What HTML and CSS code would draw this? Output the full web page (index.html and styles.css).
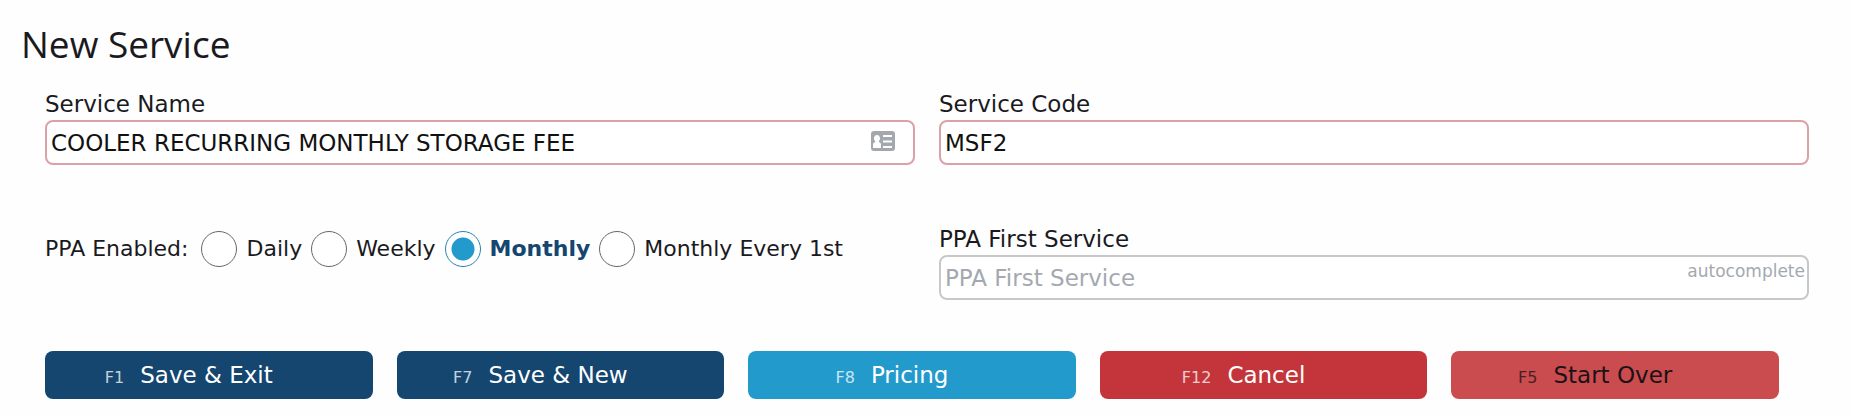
FILE: index.html
```html
<!DOCTYPE html>
<html lang="en">
<head>
    <meta charset="UTF-8">
    <meta name="viewport" content="width=device-width, initial-scale=1.0">
    <title>New Service</title>
    <link rel="stylesheet" href="styles.css">
</head>
<body>
    <h1>New Service</h1>

    <form class="service-form">
        <div class="fields">
            <div class="field">
                <label for="service-name">Service Name</label>
                <div class="input-wrap">
                    <input type="text" id="service-name" class="required" value="COOLER RECURRING MONTHLY STORAGE FEE">
                    <svg class="card-icon" viewBox="0 0 24 20" aria-hidden="true">
                        <rect width="24" height="20" rx="3" fill="#a3a8ae"/>
                        <path fill="#fff" d="M6 4c1.800 0 3 1.300 3 3.200 0 1.300-.5 2.300-1.200 2.900v.9c1.400.4 2.200 1.300 2.200 2.700V17H2v-3.300c0-1.400.8-2.300 2.200-2.700v-.9C3.500 9.500 3 8.500 3 7.200 3 5.300 4.200 4 6 4z"/>
                        <path stroke="#fff" stroke-width="2" d="M12 5h9M12 10.500h9M12 16h9"/>
                    </svg>
                </div>
            </div>

            <div class="field">
                <label for="service-code">Service Code</label>
                <input type="text" id="service-code" class="required" value="MSF2">
            </div>

            <div class="radio-group" role="radiogroup" aria-labelledby="ppa-label">
                <span id="ppa-label" class="group-label">PPA Enabled:</span>
                <input type="radio" name="ppa" id="ppa-daily">
                <label for="ppa-daily">Daily</label>
                <input type="radio" name="ppa" id="ppa-weekly">
                <label for="ppa-weekly">Weekly</label>
                <input type="radio" name="ppa" id="ppa-monthly" checked>
                <label for="ppa-monthly">Monthly</label>
                <input type="radio" name="ppa" id="ppa-first">
                <label for="ppa-first">Monthly Every 1st</label>
            </div>

            <div class="field">
                <label for="first-service">PPA First Service</label>
                <div class="input-wrap">
                    <input type="text" id="first-service" placeholder="PPA First Service">
                    <span class="hint">autocomplete</span>
                </div>
            </div>
        </div>

        <div class="buttons">
            <button type="button" class="save"><small>F1</small>Save &amp; Exit</button>
            <button type="button" class="save"><small>F7</small>Save &amp; New</button>
            <button type="button" class="pricing"><small>F8</small>Pricing</button>
            <button type="button" class="cancel"><small>F12</small>Cancel</button>
            <button type="button" class="start-over"><small>F5</small>Start Over</button>
        </div>
    </form>
</body>
</html>
```

FILE: styles.css
```css
* {
    box-sizing: border-box;
}
body {
    margin: 0;
    padding: 16px 42px 16px 21px;
    background: #fefefe;
    color: #1a1a1e;
    font-family: Verdana, 'DejaVu Sans', sans-serif;
    font-size: 23px;
    line-height: 28px;
}
h1 {
    margin: 0 0 18px;
    font-family: 'Segoe UI', 'Open Sans', sans-serif;
    font-size: 37px;
    font-weight: 400;
    line-height: 56px;
}
.service-form {
    padding-left: 24px;
}
.fields {
    display: grid;
    grid-template-columns: 1fr 1fr;
    column-gap: 24px;
    row-gap: 60px;
}
.field label {
    display: block;
    margin-bottom: 2px;
}
.input-wrap {
    position: relative;
}
input[type="text"] {
    display: block;
    width: 100%;
    height: 45px;
    padding: 0 4px;
    border: 2px solid #c8c8c8;
    border-radius: 8px;
    background: #fff;
    color: #111;
    font: inherit;
}
input[type="text"].required {
    border-color: #dca1a5;
}
input::placeholder {
    color: #a3a9af;
    opacity: 1;
}
.card-icon {
    position: absolute;
    top: 11px;
    right: 20px;
    width: 24px;
    height: 20px;
}
.hint {
    position: absolute;
    top: 2px;
    right: 4px;
    color: #a3a9af;
    font-size: 17px;
}
.radio-group {
    display: flex;
    align-items: center;
    align-self: start;
    gap: 9px;
    padding-top: 6px;
    font-size: 22px;
}
.group-label {
    margin-right: 4px;
}
input[type="radio"] {
    appearance: none;
    width: 36px;
    height: 36px;
    margin: 0;
    border: 1px solid #66666a;
    border-radius: 50%;
    background: #fff;
}
input[type="radio"]:checked {
    border-color: #2585b5;
    background: radial-gradient(circle, #229acb 11px, #fff 12px);
}
input[type="radio"]:checked + label {
    color: #14466f;
    font-weight: bold;
}
.buttons {
    display: flex;
    gap: 24px;
    margin-top: 51px;
    padding-right: 30px;
}
button {
    flex: 1;
    display: flex;
    justify-content: center;
    align-items: baseline;
    gap: 16px;
    padding: 10px 40px 10px 0;
    border: none;
    border-radius: 8px;
    color: #fff;
    font: inherit;
    cursor: pointer;
}
button small {
    font-size: 16px;
    line-height: 20px;
    opacity: 0.75;
}
.save {
    background: #14466f;
}
.pricing {
    background: #229acb;
}
.cancel {
    background: #c3353a;
}
.start-over {
    background: #ca4c4f;
    color: #1a1216;
}
```
